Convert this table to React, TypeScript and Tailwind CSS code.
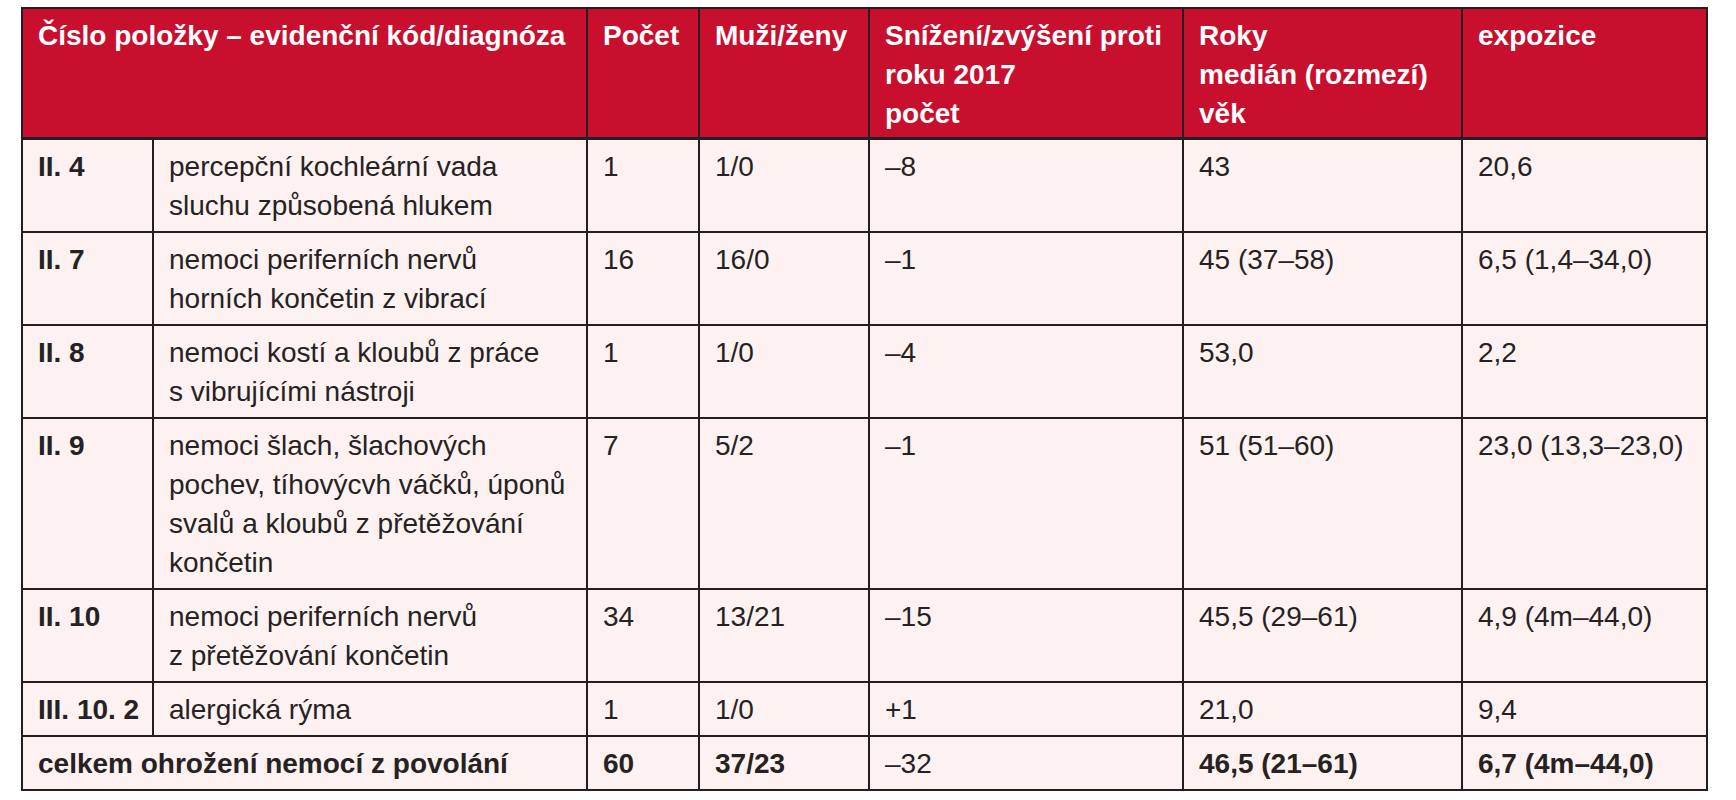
type Row = {
  code: string;
  desc: string[];
  count: string;
  mf: string;
  diff: string;
  age: string;
  exp: string;
};

const rows: Row[] = [
  {
    code: "II. 4",
    desc: ["percepční kochleární vada", "sluchu způsobená hlukem"],
    count: "1",
    mf: "1/0",
    diff: "–8",
    age: "43",
    exp: "20,6",
  },
  {
    code: "II. 7",
    desc: ["nemoci periferních nervů", "horních končetin z vibrací"],
    count: "16",
    mf: "16/0",
    diff: "–1",
    age: "45 (37–58)",
    exp: "6,5 (1,4–34,0)",
  },
  {
    code: "II. 8",
    desc: ["nemoci kostí a kloubů z práce", "s vibrujícími nástroji"],
    count: "1",
    mf: "1/0",
    diff: "–4",
    age: "53,0",
    exp: "2,2",
  },
  {
    code: "II. 9",
    desc: [
      "nemoci šlach, šlachových",
      "pochev, tíhovýcvh váčků, úponů",
      "svalů a kloubů z přetěžování",
      "končetin",
    ],
    count: "7",
    mf: "5/2",
    diff: "–1",
    age: "51 (51–60)",
    exp: "23,0 (13,3–23,0)",
  },
  {
    code: "II. 10",
    desc: ["nemoci periferních nervů", "z přetěžování končetin"],
    count: "34",
    mf: "13/21",
    diff: "–15",
    age: "45,5 (29–61)",
    exp: "4,9 (4m–44,0)",
  },
  {
    code: "III. 10. 2",
    desc: ["alergická rýma"],
    count: "1",
    mf: "1/0",
    diff: "+1",
    age: "21,0",
    exp: "9,4",
  },
];

function Lines({ lines }: { lines: string[] }) {
  return (
    <>
      {lines.map((l, i) => (
        <span key={i} className="block">
          {l}
        </span>
      ))}
    </>
  );
}

// header cells sit on a slightly heavier rule
const th =
  "border-2 border-b-[3px] border-[#231f20] px-[15px] pt-[7px] pb-[4px] text-left align-top font-bold whitespace-nowrap";
const td =
  "border-2 border-[#231f20] px-[15px] pt-[7px] pb-[6px] text-left align-top whitespace-nowrap";

export default function App() {
  return (
    <div className="min-h-screen bg-white pl-[21px] pt-[7px] font-['Liberation_Sans',Arial,sans-serif] text-[28px] leading-[39px] text-[#262223]">
      <table className="w-[1685px] table-fixed border-collapse border-2 border-[#231f20]">
        <colgroup>
          <col className="w-[131px]" />
          <col className="w-[434px]" />
          <col className="w-[112px]" />
          <col className="w-[170px]" />
          <col className="w-[314px]" />
          <col className="w-[279px]" />
          <col className="w-[245px]" />
        </colgroup>
        <thead>
          <tr className="bg-[#c80f2e] text-white">
            <th colSpan={2} className={th}>
              Číslo položky – evidenční kód/diagnóza
            </th>
            <th className={th}>Počet</th>
            <th className={th}>Muži/ženy</th>
            <th className={th}>
              <Lines lines={["Snížení/zvýšení proti", "roku 2017", "počet"]} />
            </th>
            <th className={th}>
              <Lines lines={["Roky", "medián (rozmezí)", "věk"]} />
            </th>
            <th className={th}>expozice</th>
          </tr>
        </thead>
        <tbody className="bg-[#fdf2f1]">
          {rows.map((r) => (
            <tr key={r.code}>
              <td className={`${td} font-bold`}>{r.code}</td>
              <td className={td}>
                <Lines lines={r.desc} />
              </td>
              <td className={td}>{r.count}</td>
              <td className={td}>{r.mf}</td>
              <td className={td}>{r.diff}</td>
              <td className={td}>{r.age}</td>
              <td className={td}>{r.exp}</td>
            </tr>
          ))}
          <tr>
            <td colSpan={2} className={`${td} font-bold`}>
              celkem ohrožení nemocí z povolání
            </td>
            <td className={`${td} font-bold`}>60</td>
            <td className={`${td} font-bold`}>37/23</td>
            <td className={td}>–32</td>
            <td className={`${td} font-bold`}>46,5 (21–61)</td>
            <td className={`${td} font-bold`}>6,7 (4m–44,0)</td>
          </tr>
        </tbody>
      </table>
    </div>
  );
}
